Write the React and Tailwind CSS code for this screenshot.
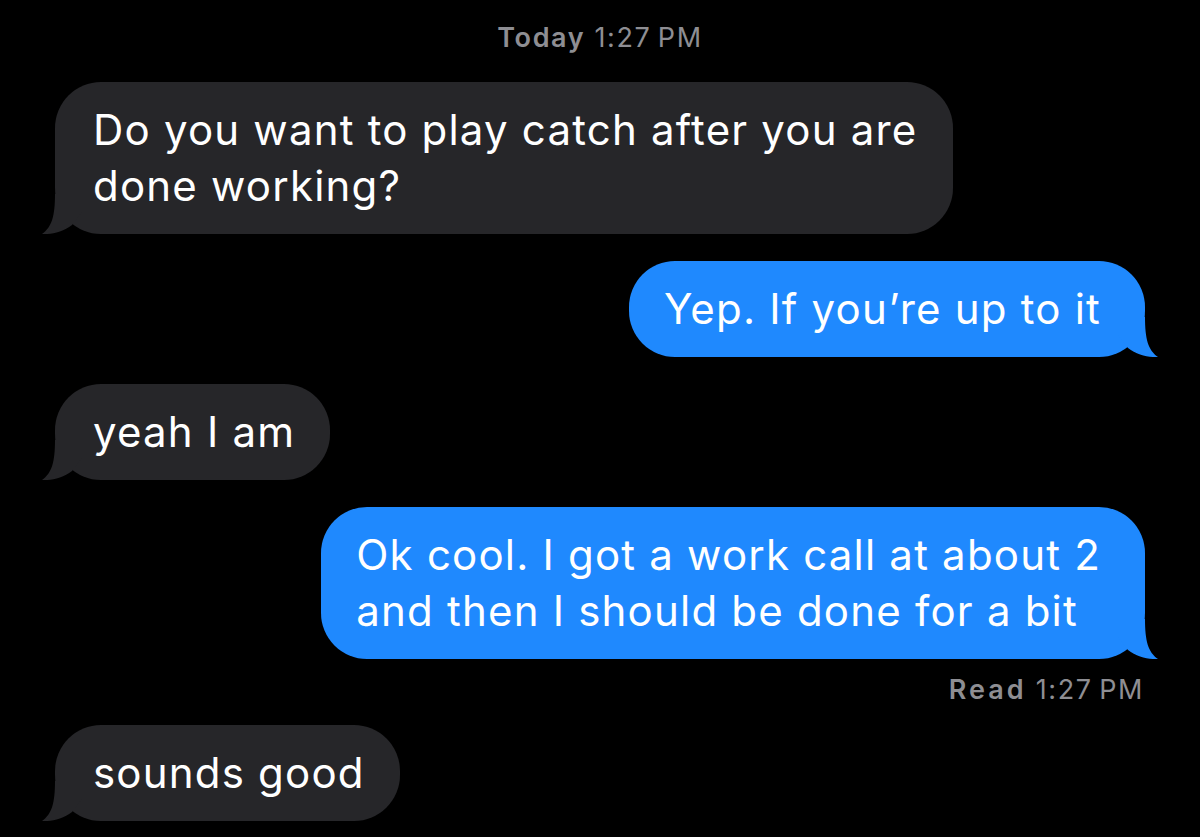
import React from "react";

const GRAY = "#262629";
const BLUE = "#1f89fe";

function Tail({ side, color }) {
  const cls =
    side === "left"
      ? "absolute bottom-0 left-[-13px]"
      : "absolute bottom-0 right-[-13px] -scale-x-100";
  return (
    <svg className={cls} width="40" height="40" viewBox="0 0 40 40">
      <path
        d="M13 0 C13 22 10 33 0 40 C9 40.6 21 38 30 31 L40 18 L40 0 Z"
        fill={color}
      />
    </svg>
  );
}

function Bubble({ side, children }) {
  const left = side === "left";
  return (
    <div
      className={
        "relative rounded-[46px] py-[20px] text-[42px] tracking-[1.2px] leading-[56px] text-white whitespace-nowrap " +
        (left
          ? "self-start bg-[#262629] pl-[38px] pr-[35px]"
          : "self-end bg-[#1f89fe] pl-[35px] pr-[44px]")
      }
    >
      <Tail side={side} color={left ? GRAY : BLUE} />
      <div className="relative">{children}</div>
    </div>
  );
}

export default function App() {
  return (
    <div
      className="w-[1200px] h-[837px] bg-black overflow-hidden flex flex-col pl-[55px] pr-[55px] pt-[23px]"
      style={{ fontFamily: "Inter, 'Liberation Sans', sans-serif" }}
    >
      <div className="self-center text-[27px] tracking-[1.6px] leading-[30px] text-[#8e8e93]">
        <span className="font-semibold">Today</span> 1:27&#8239;PM
      </div>
      <div className="mt-[29px] flex flex-col">
        <Bubble side="left">
          Do you want to play catch after you are
          <br />
          done working?
        </Bubble>
        <div className="h-[27px]" />
        <Bubble side="right">Yep. If you’re up to it</Bubble>
        <div className="h-[27px]" />
        <Bubble side="left">yeah I am</Bubble>
        <div className="h-[27px]" />
        <Bubble side="right">
          Ok cool. I got a work call at about 2
          <br />
          and then I should be done for a bit
        </Bubble>
        <div className="self-end mt-[16px] mr-[1px] text-[27px] tracking-[1.6px] leading-[30px] text-[#8e8e93]">
          <span className="font-semibold tracking-[3px]">Read</span> 1:27&#8239;PM
        </div>
        <div className="h-[20px]" />
        <Bubble side="left">sounds good</Bubble>
      </div>
    </div>
  );
}
